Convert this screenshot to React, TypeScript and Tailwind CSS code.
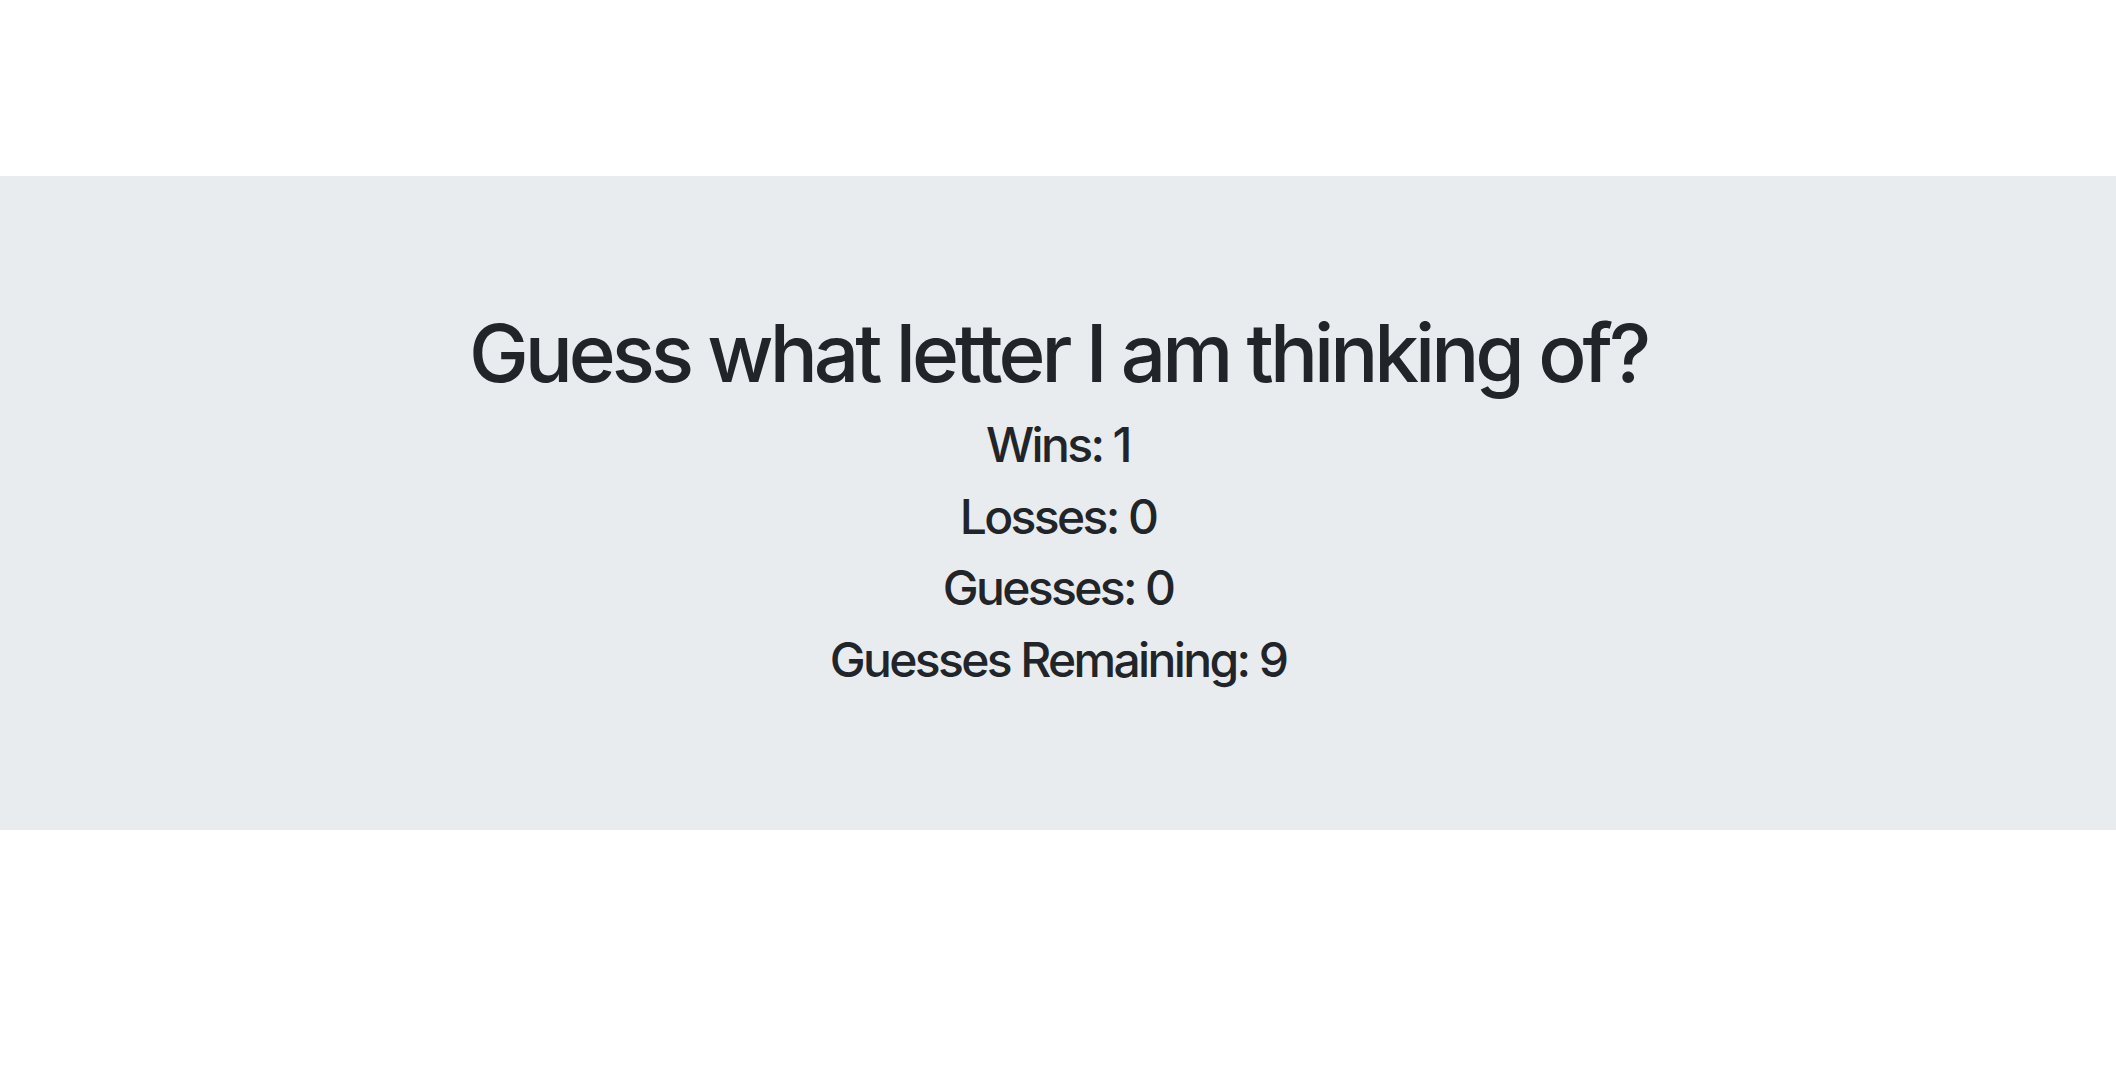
export default function App() {
  return (
    <div className="min-h-screen bg-white" style={{ fontFamily: 'Inter, "Noto Sans", sans-serif' }}>
      <div className="h-[176px]" />
      <div className="bg-[#e9ecef] pt-[129px] pb-[135px] text-center text-[#212529]">
        <h1 className="text-[80px] leading-[96px] font-medium tracking-[-0.05em]">Guess what letter I am thinking of?</h1>
        <div className="mt-[8px] text-[48px] leading-[71.5px] font-medium tracking-[-0.055em]">
          <p>Wins: 1</p>
          <p>Losses: 0</p>
          <p>Guesses: 0</p>
          <p>Guesses Remaining: 9</p>
        </div>
      </div>
    </div>
  );
}
